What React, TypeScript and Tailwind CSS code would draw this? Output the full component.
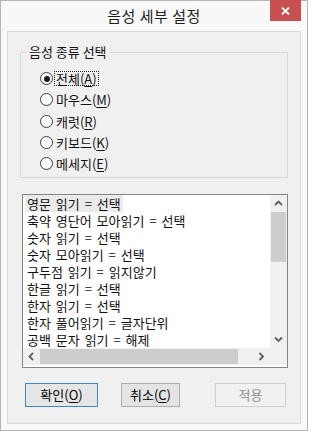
import type { ReactNode } from 'react';

const rows = [
  '영문 읽기 = 선택',
  '축약 영단어 모아읽기 = 선택',
  '숫자 읽기 = 선택',
  '숫자 모아읽기 = 선택',
  '구두점 읽기 = 읽지않기',
  '한글 읽기 = 선택',
  '한자 읽기 = 선택',
  '한자 풀어읽기 = 글자단위',
  '공백 문자 읽기 = 해제',
];

const voices = [
  { name: '전체', key: 'A', checked: true },
  { name: '마우스', key: 'M' },
  { name: '캐럿', key: 'R' },
  { name: '키보드', key: 'K' },
  { name: '메세지', key: 'E' },
];

function Chevron({ dir }: { dir: 'up' | 'down' | 'left' | 'right' }) {
  const points = {
    up: '1,5 4.5,1.5 8,5',
    down: '1,1.5 4.5,5 8,1.5',
    left: '5,1 1.5,4.5 5,8',
    right: '1.5,1 5,4.5 1.5,8',
  }[dir];
  const vertical = dir === 'up' || dir === 'down';
  return (
    <svg
      width={vertical ? 9 : 7}
      height={vertical ? 7 : 9}
      viewBox={vertical ? '0 0 9 7' : '0 0 7 9'}
      className="text-[#606060]"
    >
      <polyline points={points} fill="none" stroke="currentColor" strokeWidth="1.8" />
    </svg>
  );
}

function Radio({ name, hotkey, checked }: { name: string; hotkey: string; checked?: boolean }) {
  return (
    <div className="flex h-[21.3px] items-center">
      <span className="flex size-[13px] items-center justify-center rounded-full border border-[#3a3a3a] bg-white">
        {checked && <span className="size-[6px] rounded-full bg-[#1a1a1a]" />}
      </span>
      <span
        className={
          'ml-[1px] border px-[1px] leading-[13px] ' +
          (checked ? 'border-dotted border-[#222]' : 'border-transparent')
        }
      >
        {name}(<u className="underline-offset-2">{hotkey}</u>)
      </span>
    </div>
  );
}

function Btn({
  children,
  variant = 'normal',
  width,
}: {
  children: ReactNode;
  variant?: 'default' | 'normal' | 'disabled';
  width: string;
}) {
  const look = {
    default: 'border-[#3c86c8] bg-[#e6e6e6] text-black',
    normal: 'border-[#adadad] bg-[#e4e4e4] text-black',
    disabled: 'border-[#cfcfcf] bg-[#f1f1f1] text-[#8d8d8d]',
  }[variant];
  return (
    <div className={'flex h-[24px] items-center justify-center border text-[13px] ' + look + ' ' + width}>
      {children}
    </div>
  );
}

export default function App() {
  return (
    <div className="flex h-[431px] w-[308px] flex-col border border-[#b5b5b5] bg-[#f8f8f8] font-['Noto_Sans_CJK_KR',sans-serif] text-[13px] text-[#111]">
      {/* title bar */}
      <div className="relative flex h-[30px] shrink-0 items-center justify-center">
        <span className="text-[15px] leading-[18px] tracking-[0.5px] text-[#1e1e1e]">음성 세부 설정</span>
        <div className="absolute right-[6px] top-[-1px] flex h-[21px] w-[31px] items-center justify-center bg-[#c75050]">
          <svg width="9" height="8" viewBox="0 0 9 8">
            <path d="M1 0.5 L8 7.5 M8 0.5 L1 7.5" stroke="white" strokeWidth="1.8" />
          </svg>
        </div>
      </div>

      {/* client area */}
      <div className="mx-[6px] mb-[6px] flex flex-1 flex-col border border-[#dadada] bg-[#f0f0f0] px-[12px]">
        <fieldset className="mt-[12px] h-[134px] border border-[#d9d9d9]">
          <legend className="ml-[6px] px-[2px] leading-[16px]">음성 종류 선택</legend>
          <div className="mt-[8px] flex flex-col pl-[19px]">
            {voices.map((v) => (
              <Radio key={v.key} name={v.name} hotkey={v.key} checked={v.checked} />
            ))}
          </div>
        </fieldset>

        {/* list box */}
        <div className="ml-[2px] mt-[16px] grid h-[174px] grid-cols-[1fr_17px] grid-rows-[153px_17px] border border-[#858585] bg-white">
          <div className="overflow-hidden pl-[2px]">
            {rows.map((r, i) => (
              <div key={r} className="flex h-[17px] items-center">
                <span
                  className={
                    'whitespace-pre px-[2px] leading-[17px] [word-spacing:2px] ' + (i === 0 ? 'bg-[#ebebeb]' : '')
                  }
                >
                  {r}
                </span>
              </div>
            ))}
          </div>
          <div className="flex flex-col bg-[#f0f0f0]">
            <div className="flex h-[17px] items-center justify-center">
              <Chevron dir="up" />
            </div>
            <div className="flex-1 px-[1px]">
              <div className="h-[50px] bg-[#cdcdcd]" />
            </div>
            <div className="flex h-[17px] items-center justify-center">
              <Chevron dir="down" />
            </div>
          </div>
          <div className="flex items-center bg-[#f0f0f0]">
            <div className="flex w-[17px] items-center justify-center">
              <Chevron dir="left" />
            </div>
            <div className="flex h-full flex-1 py-[1px]">
              <div className="w-[198px] bg-[#cdcdcd]" />
            </div>
            <div className="flex w-[17px] items-center justify-center">
              <Chevron dir="right" />
            </div>
          </div>
          <div className="bg-[#f0f0f0]" />
        </div>

        {/* buttons */}
        <div className="mt-[15px] flex items-center pl-[5px]">
          <Btn variant="default" width="w-[73px]">
            <span>
              확인(<u className="underline-offset-2">O</u>)
            </span>
          </Btn>
          <div className="w-[23px]" />
          <Btn width="w-[59px]">
            <span>
              취소(<u className="underline-offset-2">C</u>)
            </span>
          </Btn>
          <div className="w-[35px]" />
          <Btn variant="disabled" width="w-[71px]">
            적용
          </Btn>
        </div>
      </div>
    </div>
  );
}
